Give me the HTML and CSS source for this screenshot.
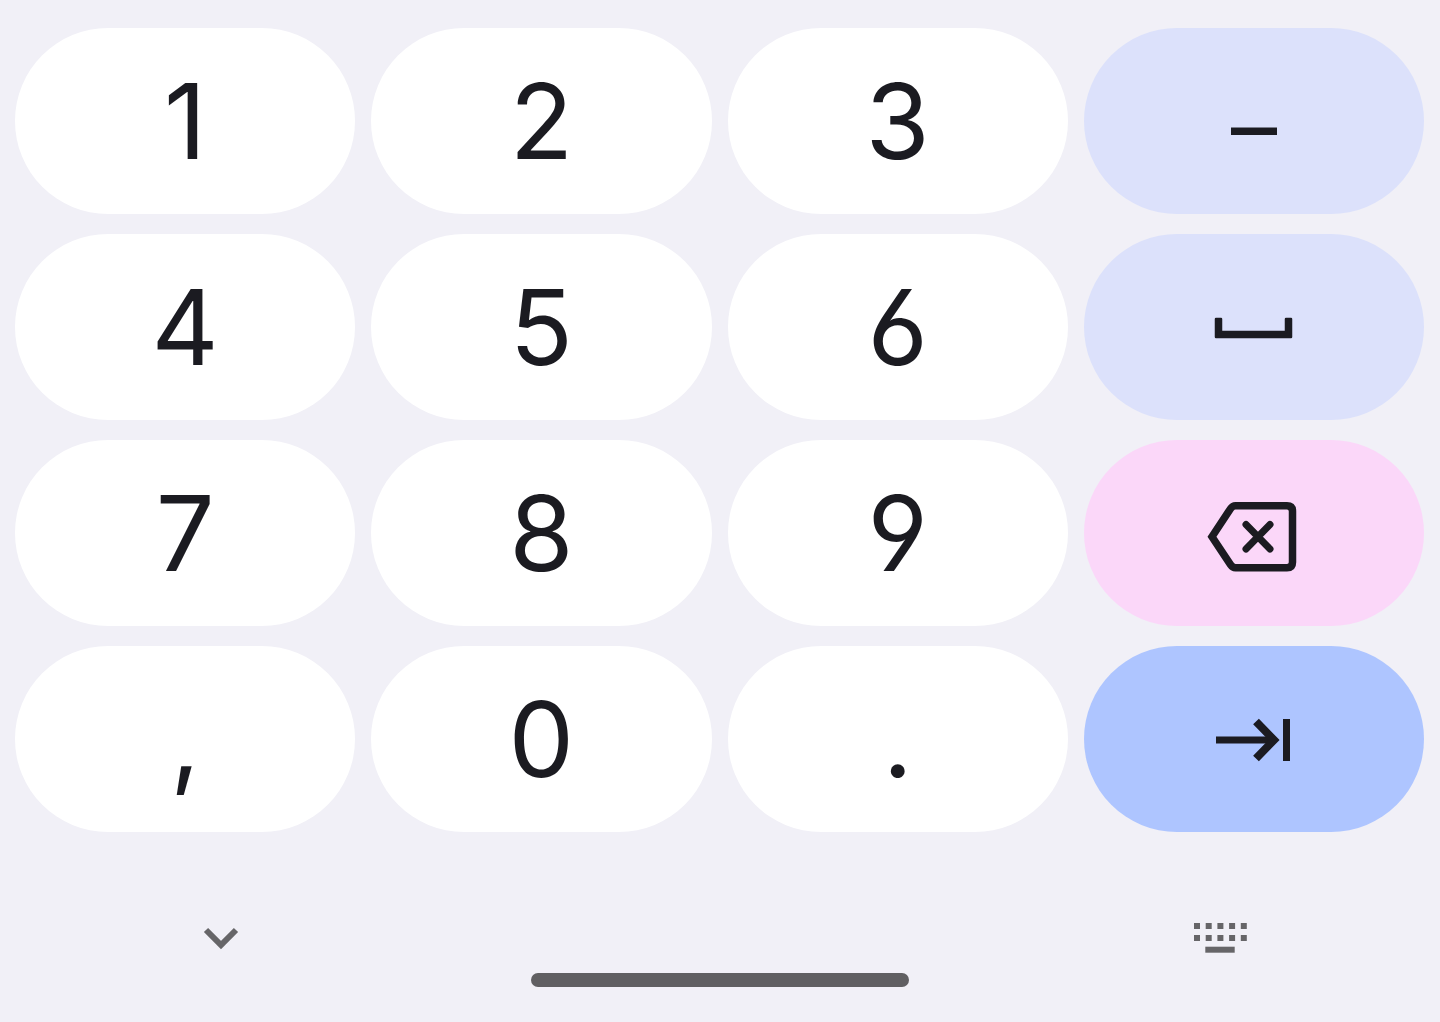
FILE: index.html
```html
<!DOCTYPE html>
<html lang="en">
<head>
<meta charset="utf-8">
<meta name="viewport" content="width=device-width, initial-scale=1">
<title>Numeric keypad</title>
<link rel="stylesheet" href="styles.css">
</head>
<body>
<main class="keypad">
  <button class="key">1</button>
  <button class="key">2</button>
  <button class="key">3</button>
  <button class="key key-soft key-minus" aria-label="Minus">–</button>
  <button class="key">4</button>
  <button class="key">5</button>
  <button class="key">6</button>
  <button class="key key-soft" aria-label="Space"><svg class="icon" viewBox="0 0 100 80"><path d="M12 32h5v13h65V32h5v18H12Z" fill="currentColor" stroke="currentColor" stroke-width="2.500" stroke-linejoin="round"/></svg></button>
  <button class="key">7</button>
  <button class="key">8</button>
  <button class="key">9</button>
  <button class="key key-delete" aria-label="Backspace"><svg class="icon" viewBox="0 0 100 80"><path d="M31.500 12.700H83q5.500 0 5.500 5.500v51q0 5.500-5.500 5.500H31.500q-3 0-5-3L8 43.700 26.500 15.700q2-3 5-3Z" fill="none" stroke="currentColor" stroke-width="7.500"/><path d="M42 31.500l24 24.500M66 31.500L42 56" fill="none" stroke="currentColor" stroke-width="7" stroke-linecap="round"/></svg></button>
  <button class="key">,</button>
  <button class="key">0</button>
  <button class="key">.</button>
  <button class="key key-next" aria-label="Next field"><svg class="icon" viewBox="0 0 100 80"><path d="M12 41H70M82.500 20v42" fill="none" stroke="currentColor" stroke-width="7"/><path d="M52 22.500 70 41 52 59.500" fill="none" stroke="currentColor" stroke-width="8"/></svg></button>
</main>
<footer class="nav">
  <div class="nav-actions">
    <button class="nav-button" aria-label="Hide keyboard"><svg class="nav-icon" viewBox="0 0 60 40"><path d="M16 12 31 27 46 12" fill="none" stroke="currentColor" stroke-width="6"/></svg></button>
    <button class="nav-button" aria-label="Switch keyboard"><svg class="nav-icon" viewBox="0 0 60 40"><path d="M4 8H57M4 20H57" fill="none" stroke="currentColor" stroke-width="6" stroke-dasharray="6 5.700"/><path d="M15.300 31.700H44.700" stroke="currentColor" stroke-width="6"/></svg></button>
  </div>
  <div class="handle"></div>
</footer>
</body>
</html>
```
FILE: styles.css
```css
* { box-sizing: border-box; }
body {
  margin: 0;
  background: #f1f0f7;
  color: #1b1b21;
  font-family: Inter, sans-serif;
}
button { border: 0; padding: 0; color: inherit; font: inherit; }
.keypad {
  display: grid;
  grid-template-columns: repeat(4, 1fr);
  gap: 20px 16px;
  padding: 28px 16px 0 15px;
}
.key {
  display: flex;
  align-items: center;
  justify-content: center;
  height: 186px;
  border-radius: 93px;
  background: #fff;
  font-size: 104px;
  line-height: 124px;
  /* open six and nine */
  font-feature-settings: "cv03", "cv04";
}
.key-soft { background: #dce1fb; }
.key-minus { padding-top: 12px; font-size: 92px; }
.key-delete { background: #fbd7f9; }
.key-next { background: #aec5ff; }
.icon { width: 100px; height: 80px; }
.nav { padding-top: 86px; }
.nav-actions {
  display: flex;
  justify-content: space-between;
  padding: 0 190px;
}
.nav-button { display: flex; background: transparent; color: #666568; }
.nav-icon { width: 60px; height: 40px; }
.handle {
  width: 378px;
  max-width: 60%;
  height: 14px;
  margin: 15px auto 0;
  border-radius: 7px;
  background: #605f62;
}
```
